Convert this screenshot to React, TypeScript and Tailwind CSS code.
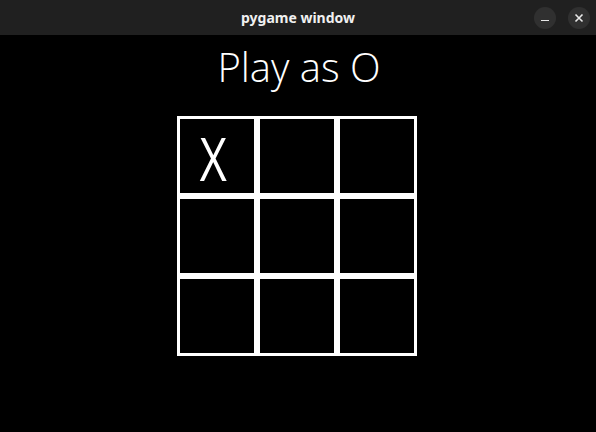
const CELLS = ["X", "", "", "", "", "", "", "", ""];

export default function App() {
  return (
    <div className="flex h-[432px] w-[596px] flex-col overflow-hidden bg-black">
      <div className="relative flex h-[35px] shrink-0 items-center justify-center bg-[#202020]">
        <span className="font-['Noto_Sans',sans-serif] text-[14px] font-bold text-[#f0f0f0]">
          pygame window
        </span>
        <div className="absolute right-[6px] top-[7px] flex gap-[12px]">
          <div className="flex h-[22px] w-[22px] items-center justify-center rounded-full bg-[#303030]">
            <div className="mt-[5px] h-[1.5px] w-[8px] bg-[#e8e8e8]" />
          </div>
          <div className="flex h-[22px] w-[22px] items-center justify-center rounded-full bg-[#303030]">
            <svg width="10" height="10" viewBox="0 0 10 10">
              <path d="M1.5 1.5 L8.5 8.5 M8.5 1.5 L1.5 8.5" stroke="#e8e8e8" strokeWidth="1.6" />
            </svg>
          </div>
        </div>
      </div>
      <div className="flex flex-col items-center">
        <h1 className="ml-[2px] mt-[4px] h-[59px] font-['Open_Sans',sans-serif] text-[40px] font-light leading-[55px] text-white">
          Play as O
        </h1>
        <div className="ml-[-2px] mt-[18px] grid grid-cols-[repeat(3,80px)] grid-rows-[repeat(3,80px)]">
          {CELLS.map((c, i) => (
            <div
              key={i}
              className="flex items-center justify-center border-[3px] border-white pr-[7px] pt-[3px] font-['Open_Sans',sans-serif] text-[60px] font-normal leading-none text-white"
            >
              <span className="inline-block scale-x-[0.78]">{c}</span>
            </div>
          ))}
        </div>
      </div>
    </div>
  );
}
